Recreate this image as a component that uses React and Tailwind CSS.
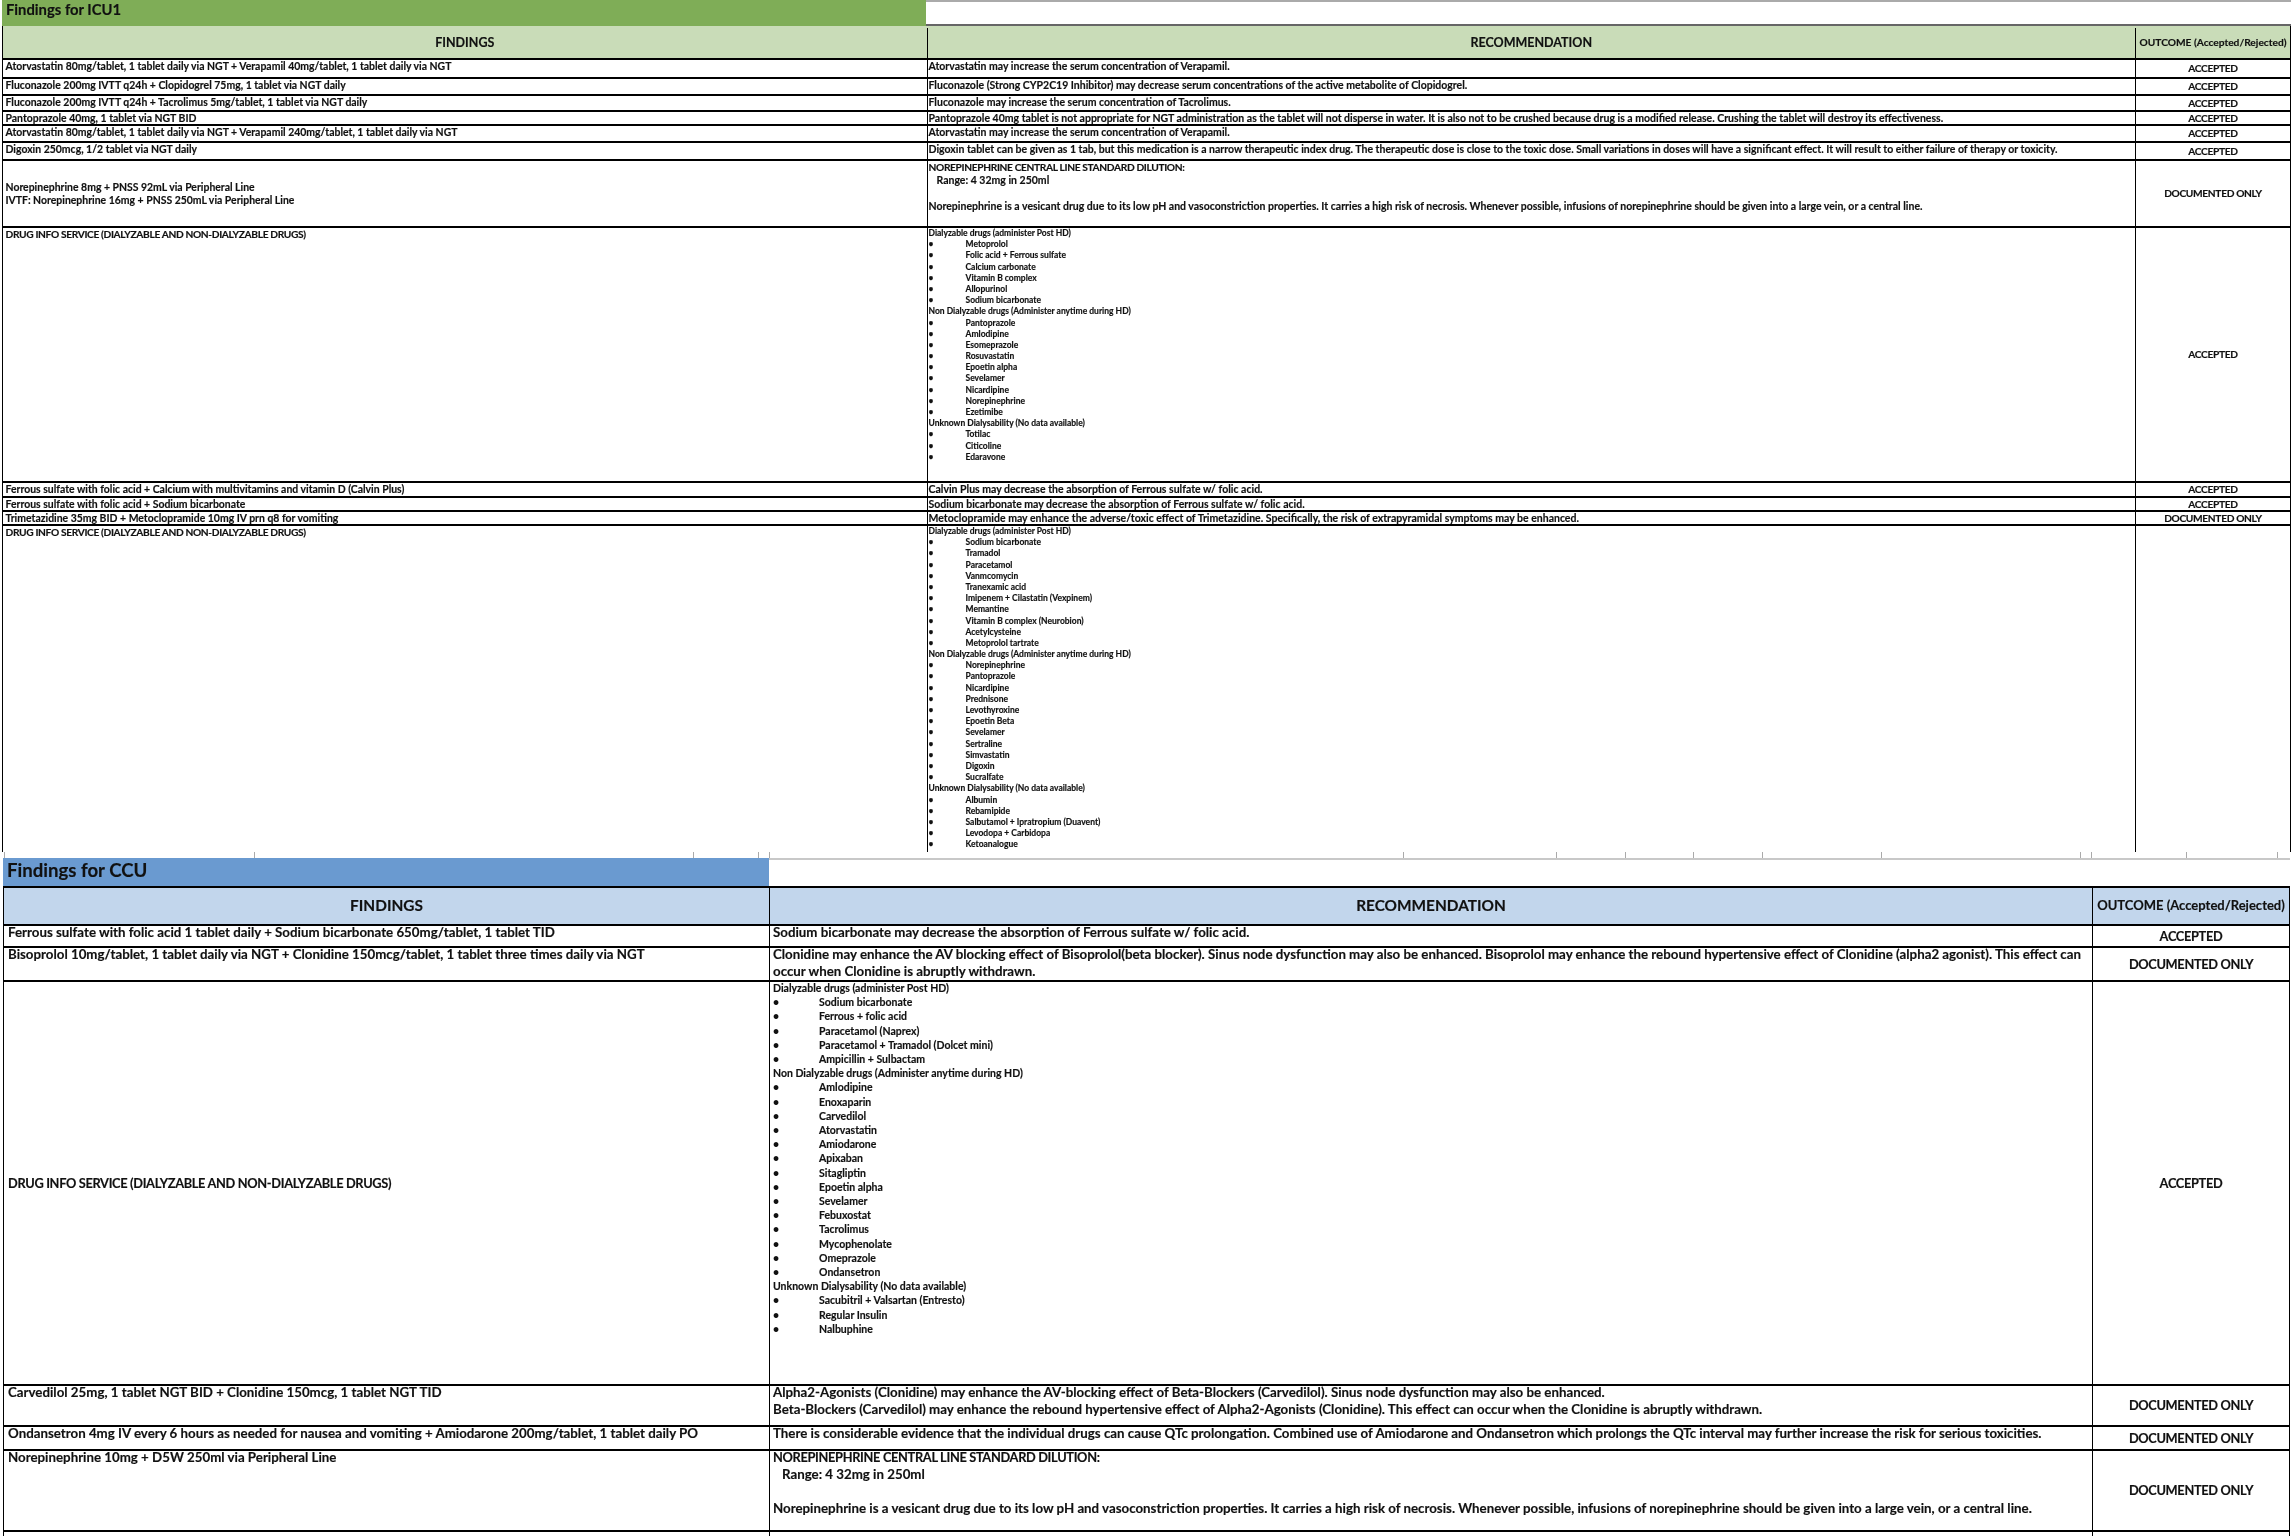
const LINE_A = 'border-b-2 border-[#666]';
const LINE_B = 'border-b-2 border-[#111]';
const CAPS_ICU = 'text-[10.2px] tracking-[-0.35px]';
const CAPS_CCU = 'text-[12.8px] tracking-[-0.33px]';

const norepinephrineNote =
  'Norepinephrine is a vesicant drug due to its low pH and vasoconstriction properties. It carries a high risk of necrosis. Whenever possible, infusions of norepinephrine should be given into a large vein, or a central line.';

const icuListOne = [
  ['Dialyzable drugs (administer Post HD)', ['Metoprolol', 'Folic acid + Ferrous sulfate', 'Calcium carbonate', 'Vitamin B complex', 'Allopurinol', 'Sodium bicarbonate']],
  ['Non Dialyzable drugs (Administer anytime during HD)', ['Pantoprazole', 'Amlodipine', 'Esomeprazole', 'Rosuvastatin', 'Epoetin alpha', 'Sevelamer', 'Nicardipine', 'Norepinephrine', 'Ezetimibe']],
  ['Unknown Dialysability (No data available)', ['Totilac', 'Citicoline', 'Edaravone']],
];

const icuListTwo = [
  ['Dialyzable drugs (administer Post HD)', ['Sodium bicarbonate', 'Tramadol', 'Paracetamol', 'Vanmcomycin', 'Tranexamic acid', 'Imipenem + Cilastatin (Vexpinem)', 'Memantine', 'Vitamin B complex (Neurobion)', 'Acetylcysteine', 'Metoprolol tartrate']],
  ['Non Dialyzable drugs (Administer anytime during HD)', ['Norepinephrine', 'Pantoprazole', 'Nicardipine', 'Prednisone', 'Levothyroxine', 'Epoetin Beta', 'Sevelamer', 'Sertraline', 'Simvastatin', 'Digoxin', 'Sucralfate']],
  ['Unknown Dialysability (No data available)', ['Albumin', 'Rebamipide', 'Salbutamol + Ipratropium (Duavent)', 'Levodopa + Carbidopa', 'Ketoanalogue']],
];

const ccuList = [
  ['Dialyzable drugs (administer Post HD)', ['Sodium bicarbonate', 'Ferrous + folic acid', 'Paracetamol (Naprex)', 'Paracetamol + Tramadol (Dolcet mini)', 'Ampicillin + Sulbactam']],
  ['Non Dialyzable drugs (Administer anytime during HD)', ['Amlodipine', 'Enoxaparin', 'Carvedilol', 'Atorvastatin', 'Amiodarone', 'Apixaban', 'Sitagliptin', 'Epoetin alpha', 'Sevelamer', 'Febuxostat', 'Tacrolimus', 'Mycophenolate', 'Omeprazole', 'Ondansetron']],
  ['Unknown Dialysability (No data available)', ['Sacubitril + Valsartan (Entresto)', 'Regular Insulin', 'Nalbuphine']],
];

const tickStops = [4, 254, 693, 758, 769, 1403, 1556, 1625, 1693, 1762, 1881, 2080, 2091, 2186, 2277];

function DrugList({ groups, indent, className }) {
  return (
    <div className={className}>
      {groups.map(([title, drugs]) => (
        <div key={title}>
          <div>{title}</div>
          {drugs.map((drug) => (
            <div key={drug} className="flex">
              <span className={indent}>•</span>
              <span>{drug}</span>
            </div>
          ))}
        </div>
      ))}
    </div>
  );
}

function IcuRow({ h, line, left, right, outcome, centerLeft }) {
  return (
    <div className={`grid grid-cols-[923.5px_1208.5px_1fr] border-x border-black text-[10.45px] leading-[13px] ${h} ${line}`}>
      <div className={`pl-[2.5px] ${centerLeft ? 'flex flex-col justify-center' : ''}`}>{left}</div>
      <div className="border-l border-black pl-[1px] text-[10.5px]">{right}</div>
      <div className={`flex items-center justify-center border-l border-black ${CAPS_ICU}`}>{outcome}</div>
    </div>
  );
}

function CcuRow({ h, line, left, right, outcome, centerLeft }) {
  return (
    <div className={`grid grid-cols-[765px_1323px_1fr] border-x border-black text-[13.3px] leading-[17px] ${h} ${line}`}>
      <div className={`pl-[4px] ${centerLeft ? 'flex items-center' : '-mt-[2px]'}`}>{left}</div>
      <div className="border-l border-black pl-[3px]">
        <div className="-mt-[2px]">{right}</div>
      </div>
      <div className={`flex items-center justify-center border-l border-black ${CAPS_CCU}`}>{outcome}</div>
    </div>
  );
}

function Ticks() {
  return (
    <div className="flex h-[6px] w-full">
      {tickStops.map((x, i) => (
        <div
          key={x}
          className="h-full border-l border-[#aaa]"
          style={{ width: (tickStops[i + 1] ?? 2291) - x, marginLeft: i === 0 ? x : 0 }}
        />
      ))}
    </div>
  );
}

export default function App() {
  return (
    <div className="h-[1536px] w-[2294px] overflow-hidden bg-white font-[Lato,sans-serif] font-bold text-[#111] blur-[0.35px] [-webkit-text-stroke:0.15px_#111]">
      {/* ICU */}
      <div className="ml-[2px] w-[2289px]">
        <div className="h-[26px] border-t-2 border-b-2 border-t-[#aaa] border-b-[#666]">
          <div className="-mt-[2px] h-[26px] w-[924px] bg-[#7fad57] pl-[4px] text-[14.8px] leading-[19px]">Findings for ICU1</div>
        </div>
        <div className="grid h-[34px] grid-cols-[923.5px_1208.5px_1fr] border-x border-b-2 border-black bg-[#c9dcb8] pt-[2px] text-[12.5px]">
          <div className="flex items-center justify-center">FINDINGS</div>
          <div className="flex items-center justify-center border-l border-black">RECOMMENDATION</div>
          <div className="flex items-center justify-center border-l border-black text-[10.2px]">OUTCOME (Accepted/Rejected)</div>
        </div>
        <IcuRow h="h-[19px]" line={LINE_A} left="Atorvastatin 80mg/tablet, 1 tablet daily via NGT + Verapamil 40mg/tablet, 1 tablet daily via NGT" right="Atorvastatin may increase the serum concentration of Verapamil." outcome="ACCEPTED" />
        <IcuRow h="h-[17px]" line={LINE_A} left="Fluconazole 200mg IVTT q24h + Clopidogrel 75mg, 1 tablet via NGT daily" right="Fluconazole (Strong CYP2C19 Inhibitor) may decrease serum concentrations of the active metabolite of Clopidogrel." outcome="ACCEPTED" />
        <IcuRow h="h-[16px]" line={LINE_B} left="Fluconazole 200mg IVTT q24h + Tacrolimus 5mg/tablet, 1 tablet via NGT daily" right="Fluconazole may increase the serum concentration of Tacrolimus." outcome="ACCEPTED" />
        <IcuRow h="h-[14px]" line={LINE_A} left="Pantoprazole 40mg, 1 tablet via NGT BID" right="Pantoprazole 40mg tablet is not appropriate for NGT administration as the tablet will not disperse in water. It is also not to be crushed because drug is a modified release. Crushing the tablet will destroy its effectiveness." outcome="ACCEPTED" />
        <IcuRow h="h-[17px]" line={LINE_A} left="Atorvastatin 80mg/tablet, 1 tablet daily via NGT + Verapamil 240mg/tablet, 1 tablet daily via NGT" right="Atorvastatin may increase the serum concentration of Verapamil." outcome="ACCEPTED" />
        <IcuRow h="h-[18px]" line={LINE_B} left="Digoxin 250mcg, 1/2 tablet via NGT daily" right="Digoxin tablet can be given as 1 tab, but this medication is a narrow therapeutic index drug. The therapeutic dose is close to the toxic dose. Small variations in doses will have a significant effect. It will result to either failure of therapy or toxicity." outcome="ACCEPTED" />
        <IcuRow
          h="h-[67px]"
          line={LINE_B}
          centerLeft
          left={
            <>
              <div>Norepinephrine 8mg + PNSS 92mL via Peripheral Line</div>
              <div>IVTF: Norepinephrine 16mg + PNSS 250mL via Peripheral Line</div>
            </>
          }
          right={
            <>
              <div className={CAPS_ICU}>NOREPINEPHRINE CENTRAL LINE STANDARD DILUTION:</div>
              <div className="pl-[8px]">Range: 4 32mg in 250ml</div>
              <div className="mt-[13px]">{norepinephrineNote}</div>
            </>
          }
          outcome="DOCUMENTED ONLY"
        />
        <IcuRow
          h="h-[255px]"
          line={LINE_A}
          left={<span className={CAPS_ICU}>DRUG INFO SERVICE (DIALYZABLE AND NON-DIALYZABLE DRUGS)</span>}
          right={<DrugList groups={icuListOne} indent="w-[37px]" className="text-[8.5px] leading-[11.19px]" />}
          outcome="ACCEPTED"
        />
        <IcuRow h="h-[15px]" line={LINE_A} left="Ferrous sulfate with folic acid + Calcium with multivitamins and vitamin D (Calvin Plus)" right="Calvin Plus may decrease the absorption of Ferrous sulfate w/ folic acid." outcome="ACCEPTED" />
        <IcuRow h="h-[14px]" line={LINE_B} left="Ferrous sulfate with folic acid + Sodium bicarbonate" right="Sodium bicarbonate may decrease the absorption of Ferrous sulfate w/ folic acid." outcome="ACCEPTED" />
        <IcuRow h="h-[14px]" line={LINE_B} left="Trimetazidine 35mg BID + Metoclopramide 10mg IV prn q8 for vomiting" right="Metoclopramide may enhance the adverse/toxic effect of Trimetazidine. Specifically, the risk of extrapyramidal symptoms may be enhanced." outcome="DOCUMENTED ONLY" />
        <IcuRow
          h="h-[326px]"
          left={<span className={CAPS_ICU}>DRUG INFO SERVICE (DIALYZABLE AND NON-DIALYZABLE DRUGS)</span>}
          right={<DrugList groups={icuListTwo} indent="w-[37px]" className="text-[8.5px] leading-[11.19px]" />}
          outcome=""
        />
      </div>

      <Ticks />

      {/* CCU */}
      <div className="ml-[3px] w-[2287px]">
        <div className="h-[28px] border-t-2 border-[#c8c8c8]">
          <div className="-mt-[2px] h-[28px] w-[766px] bg-[#6a9ad0] pl-[4px] text-[18.6px] leading-[25px]">Findings for CCU</div>
        </div>
        <div className="grid h-[40px] grid-cols-[765px_1323px_1fr] border-x border-y-2 border-black bg-[#c2d6ec] text-[15.4px]">
          <div className="flex items-center justify-center">FINDINGS</div>
          <div className="flex items-center justify-center border-l border-black">RECOMMENDATION</div>
          <div className="flex items-center justify-center border-l border-black text-[13px]">OUTCOME (Accepted/Rejected)</div>
        </div>
        <CcuRow h="h-[22px]" line={LINE_A} left="Ferrous sulfate with folic acid 1 tablet daily + Sodium bicarbonate 650mg/tablet, 1 tablet TID" right="Sodium bicarbonate may decrease the absorption of Ferrous sulfate w/ folic acid." outcome="ACCEPTED" />
        <CcuRow h="h-[34px]" line={LINE_A} left="Bisoprolol 10mg/tablet, 1 tablet daily via NGT + Clonidine 150mcg/tablet, 1 tablet three times daily via NGT" right="Clonidine may enhance the AV blocking effect of Bisoprolol(beta blocker). Sinus node dysfunction may also be enhanced. Bisoprolol may enhance the rebound hypertensive effect of Clonidine (alpha2 agonist). This effect can occur when Clonidine is abruptly withdrawn." outcome="DOCUMENTED ONLY" />
        <CcuRow
          h="h-[404px]"
          line={LINE_A}
          centerLeft
          left={<span className={CAPS_CCU}>DRUG INFO SERVICE (DIALYZABLE AND NON-DIALYZABLE DRUGS)</span>}
          right={<DrugList groups={ccuList} indent="w-[46px]" className="pt-[1px] text-[10.5px] leading-[14.2px]" />}
          outcome="ACCEPTED"
        />
        <CcuRow
          h="h-[41px]"
          line={LINE_A}
          left="Carvedilol 25mg, 1 tablet NGT BID + Clonidine 150mcg, 1 tablet NGT TID"
          right={
            <>
              <div>Alpha2-Agonists (Clonidine) may enhance the AV-blocking effect of Beta-Blockers (Carvedilol). Sinus node dysfunction may also be enhanced.</div>
              <div>Beta-Blockers (Carvedilol) may enhance the rebound hypertensive effect of Alpha2-Agonists (Clonidine). This effect can occur when the Clonidine is abruptly withdrawn.</div>
            </>
          }
          outcome="DOCUMENTED ONLY"
        />
        <CcuRow h="h-[24px]" line={LINE_A} left="Ondansetron 4mg IV every 6 hours as needed for nausea and vomiting + Amiodarone 200mg/tablet, 1 tablet daily PO" right="There is considerable evidence that the individual drugs can cause QTc prolongation. Combined use of Amiodarone and Ondansetron which prolongs the QTc interval may further increase the risk for serious toxicities." outcome="DOCUMENTED ONLY" />
        <CcuRow
          h="h-[81px]"
          line={LINE_A}
          left="Norepinephrine 10mg + D5W 250ml via Peripheral Line"
          right={
            <>
              <div className={CAPS_CCU}>NOREPINEPHRINE CENTRAL LINE STANDARD DILUTION:</div>
              <div className="pl-[9px]">Range: 4 32mg in 250ml</div>
              <div className="mt-[17px]">{norepinephrineNote}</div>
            </>
          }
          outcome="DOCUMENTED ONLY"
        />
        <CcuRow h="h-[4px]" left="" right="" outcome="" />
      </div>
    </div>
  );
}
